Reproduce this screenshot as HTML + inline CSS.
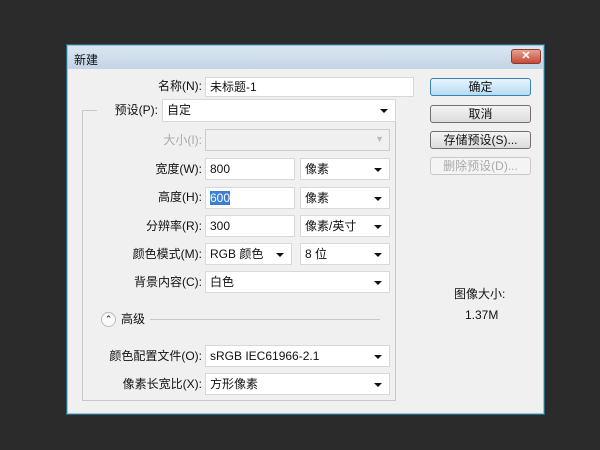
<!DOCTYPE html><html><head><meta charset="utf-8"><style>
*{margin:0;padding:0;box-sizing:border-box}
body{width:600px;height:450px;background:#2b2b2b;position:relative;overflow:hidden;font-family:"Liberation Sans","Noto Sans CJK SC",sans-serif;font-size:12px;color:#111}
.a{position:absolute}
.dlg{left:67px;top:45px;width:477px;height:369px;background:#f0f0f0;border:1px solid #9fc0d4;box-shadow:0 0 0 1px #2a6a80}
.title{left:0;top:0;width:475px;height:23px;background:linear-gradient(#dbe6f2,#c4d4e6);}
.lbl{text-align:right;width:150px;line-height:20px}
.f{background:#fff;border:1px solid #d8d8d8;line-height:19px;padding-left:4px}
.dd::after{content:"";position:absolute;right:7px;top:9px;border:4px solid transparent;border-top:4px solid #111;border-bottom:0}
.btn{width:101px;height:18px;border:1px solid #707070;border-radius:3px;background:linear-gradient(#f4f4f4,#dcdcdc);text-align:center;line-height:16px}
</style></head><body>
<div class="a dlg">
<div class="a title"></div>
<div class="a" style="left:6px;top:5px;font-size:12px">新建</div>
<div class="a" style="left:443px;top:3px;width:30px;height:15px;border:1px solid #8a3a30;border-radius:3px;background:linear-gradient(#e8a090,#c44a38);color:#fff;text-align:center;line-height:13px;font-weight:bold;font-size:11px">✕</div>
</div>
<div class="a" style="left:82px;top:110px;width:314px;height:291px;border:1px solid #c8c8c8;border-top:none"></div>
<div class="a" style="left:82px;top:110px;width:15px;border-top:1px solid #c8c8c8"></div>
<div class="a" style="left:388px;top:110px;width:8px;border-top:1px solid #c8c8c8"></div>

<div class="a lbl" style="left:52px;top:76px">名称(N):</div>
<div class="a f" style="left:205px;top:77px;width:209px;height:20px">未标题-1</div>
<div class="a lbl" style="left:8px;top:100px">预设(P):</div>
<div class="a f dd" style="left:162px;top:99px;width:234px;height:23px;line-height:21px">自定</div>
<div class="a lbl" style="left:52px;top:130px;color:#aaa">大小(I):</div>
<div class="a f" style="left:205px;top:129px;width:185px;height:22px;background:#f0f0f0;border-color:#ccc"><span class="a" style="right:5px;top:0;color:#bbb;font-size:9px">▼</span></div>

<div class="a lbl" style="left:52px;top:159px">宽度(W):</div>
<div class="a f" style="left:205px;top:158px;width:90px;height:22px;line-height:20px">800</div>
<div class="a f dd" style="left:300px;top:158px;width:90px;height:22px;line-height:20px">像素</div>
<div class="a lbl" style="left:52px;top:187px">高度(H):</div>
<div class="a f" style="left:205px;top:187px;width:90px;height:22px;line-height:20px"><span style="background:#3b7fd4;color:#fff">600</span></div>
<div class="a f dd" style="left:300px;top:187px;width:90px;height:22px;line-height:20px">像素</div>
<div class="a lbl" style="left:52px;top:216px">分辨率(R):</div>
<div class="a f" style="left:205px;top:215px;width:90px;height:22px;line-height:20px">300</div>
<div class="a f dd" style="left:300px;top:215px;width:90px;height:22px;line-height:20px">像素/英寸</div>
<div class="a lbl" style="left:52px;top:244px">颜色模式(M):</div>
<div class="a f dd" style="left:205px;top:243px;width:87px;height:22px;line-height:20px">RGB 颜色</div>
<div class="a f dd" style="left:300px;top:243px;width:90px;height:22px;line-height:20px">8 位</div>
<div class="a lbl" style="left:52px;top:272px">背景内容(C):</div>
<div class="a f dd" style="left:205px;top:271px;width:185px;height:22px;line-height:20px">白色</div>

<div class="a" style="left:101px;top:312px;width:15px;height:15px;border-radius:50%;border:1px solid #bbb;background:#fafafa;font-size:9px;text-align:center;line-height:13px">⌃</div>
<div class="a" style="left:121px;top:311px;line-height:17px">高级</div>
<div class="a" style="left:150px;top:319px;width:230px;border-top:1px solid #c8c8c8"></div>

<div class="a lbl" style="left:52px;top:346px">颜色配置文件(O):</div>
<div class="a f dd" style="left:205px;top:345px;width:185px;height:22px;line-height:20px">sRGB IEC61966-2.1</div>
<div class="a lbl" style="left:52px;top:374px">像素长宽比(X):</div>
<div class="a f dd" style="left:205px;top:373px;width:185px;height:22px;line-height:20px">方形像素</div>

<div class="a btn" style="left:430px;top:78px;border-color:#3c7fb1;background:linear-gradient(#e8f4fc,#b6dcf4)">确定</div>
<div class="a btn" style="left:430px;top:105px">取消</div>
<div class="a btn" style="left:430px;top:131px">存储预设(S)...</div>
<div class="a btn" style="left:430px;top:157px;color:#aaa;border-color:#c8c8c8;background:#f4f4f4">删除预设(D)...</div>

<div class="a" style="left:454px;top:285px">图像大小:</div>
<div class="a" style="left:465px;top:308px">1.37M</div>
</body></html>
